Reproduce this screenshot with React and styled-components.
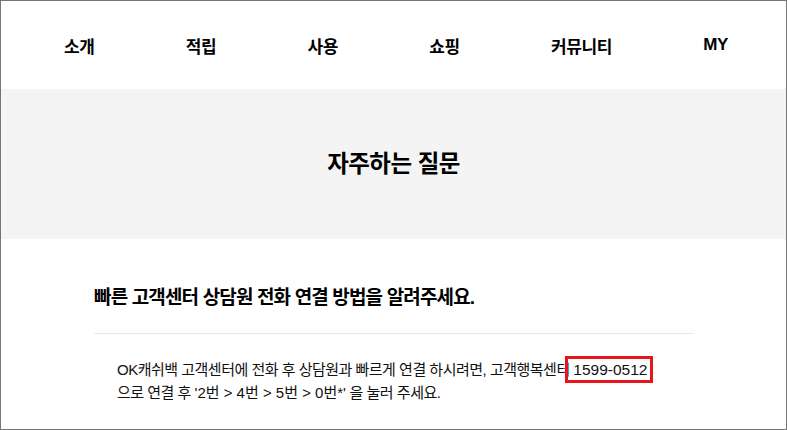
import React from 'react';
import styled, { createGlobalStyle } from 'styled-components';

const GlobalStyle = createGlobalStyle`
  html, body {
    margin: 0;
    padding: 0;
    background: #fff;
  }
  body {
    font-family: "Liberation Sans", "Noto Sans CJK KR", sans-serif;
    color: #111;
  }
`

const Frame = styled.div`
  width: 787px;
  height: 430px;
  box-sizing: border-box;
  border: 1px solid #767676;
  overflow: hidden;
`

const Nav = styled.nav`
  height: 88px;
  display: flex;
  align-items: center;
  justify-content: space-between;
  padding: 0 58px 0 63px;
`

const NavItem = styled.a`
  font-size: 17px;
  font-weight: 700;
  color: #000;
  text-decoration: none;
  letter-spacing: -0.4px;
`

const Hero = styled.section`
  height: 150px;
  background: #f4f4f4;
  display: flex;
  align-items: center;
  justify-content: center;
`

const HeroTitle = styled.h1`
  margin: 0 0 4px;
  font-size: 23.5px;
  font-weight: 700;
  color: #000;
  letter-spacing: -0.5px;
`

const Faq = styled.article`
  width: 600px;
  padding: 43px 0 0 93px;
`

const Question = styled.h2`
  margin: 0;
  padding-bottom: 24px;
  font-size: 19px;
  font-weight: 700;
  color: #000;
  letter-spacing: -0.85px;
  border-bottom: 1px solid #e8e8e8;
`

const Answer = styled.p`
  margin: 0;
  padding: 24px 0 0 23px;
  font-size: 15px;
  line-height: 23px;
  color: #111;
  letter-spacing: -0.5px;
`

const Keys = styled.span`
  letter-spacing: 0;
`

const Phone = styled.span`
  position: relative;
  font-size: 15.5px;
  letter-spacing: 0;
  &::after {
    content: "";
    position: absolute;
    left: -8px;
    right: -6px;
    top: -5px;
    bottom: -5px;
    border: 3px solid #e8141c;
  }
`

const menu = ['소개', '적립', '사용', '쇼핑', '커뮤니티', 'MY']

const App = () => {
  return (
    <Frame>
      <GlobalStyle />
      <Nav>
        {menu.map((item) => (
          <NavItem key={item} href="#">{item}</NavItem>
        ))}
      </Nav>
      <Hero>
        <HeroTitle>자주하는 질문</HeroTitle>
      </Hero>
      <Faq>
        <Question>빠른 고객센터 상담원 전화 연결 방법을 알려주세요.</Question>
        <Answer>
          OK캐쉬백 고객센터에 전화 후 상담원과 빠르게 연결 하시려면, 고객행복센터 <Phone>1599-0512</Phone>
          <br />
          으로 연결 후 <Keys>'2번 &gt; 4번 &gt; 5번 &gt; 0번*'</Keys> 을 눌러 주세요.
        </Answer>
      </Faq>
    </Frame>
  );
};

export default App;
